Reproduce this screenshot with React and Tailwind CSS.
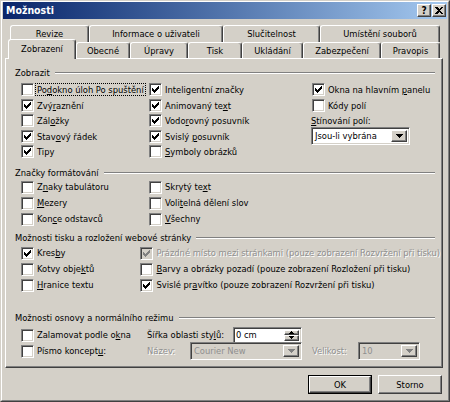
import React from "react";

const FONT = "font-['DejaVu_Sans_Condensed','Liberation_Sans',sans-serif]";

const raised =
  "border border-t-white border-l-white border-r-[#404040] border-b-[#404040] shadow-[inset_-1px_-1px_#808080]";
const sunken =
  "border border-t-[#808080] border-l-[#808080] border-r-white border-b-white shadow-[inset_1px_1px_#404040,inset_-1px_-1px_#d4d0c8]";

const CHECK_Y = [2, 3, 4, 3, 2, 1, 0];

function Box({ checked, disabled }) {
  return (
    <span
      className={`flex items-center justify-center w-[13px] h-[13px] shrink-0 ${sunken} ${
        disabled ? "bg-[#d4d0c8]" : "bg-white"
      }`}
    >
      {checked && (
        <svg width="7" height="7" viewBox="0 0 7 7" shapeRendering="crispEdges">
          {CHECK_Y.map((y, i) => (
            <rect key={i} x={i} y={y} width="1" height="3" fill={disabled ? "#808080" : "#000"} />
          ))}
        </svg>
      )}
    </span>
  );
}

function Check({ checked, disabled, focus, children, h = "h-[15.5px]" }) {
  return (
    <div className={`flex items-center ${h}`}>
      <Box checked={checked} disabled={disabled} />
      <span
        className={`ml-px px-px py-px border whitespace-nowrap ${
          focus ? "border-dotted border-black" : "border-transparent"
        } ${disabled ? "text-[#8f8f8f] [text-shadow:1px_1px_0_#fff]" : ""}`}
      >
        {children}
      </span>
    </div>
  );
}

function GroupLabel({ children, h = "h-[14px]" }) {
  return (
    <div className={`flex items-center ${h} pl-[9px] pr-[7px]`}>
      <span className="whitespace-nowrap">{children}</span>
      <span className="ml-[5px] flex-1 border-t border-t-[#808080] border-b border-b-white" />
    </div>
  );
}

function Arrow({ color = "#000" }) {
  return (
    <svg width="7" height="4" viewBox="0 0 7 4" shapeRendering="crispEdges">
      <rect x="0" y="0" width="7" height="1" fill={color} />
      <rect x="1" y="1" width="5" height="1" fill={color} />
      <rect x="2" y="2" width="3" height="1" fill={color} />
      <rect x="3" y="3" width="1" height="1" fill={color} />
    </svg>
  );
}

function Select({ value, width, disabled }) {
  return (
    <div
      className={`flex items-stretch h-[18px] ${width} ${sunken} p-[2px] ${
        disabled ? "bg-[#d4d0c8]" : "bg-white"
      }`}
    >
      <span
        className={`flex-1 flex items-center pl-px whitespace-nowrap overflow-hidden ${
          disabled ? "text-[#8f8f8f]" : ""
        }`}
      >
        {value}
      </span>
      <span className={`w-[16px] flex items-center justify-center bg-[#d4d0c8] ${raised}`}>
        <Arrow color={disabled ? "#808080" : "#000"} />
      </span>
    </div>
  );
}

function Spin({ value }) {
  return (
    <div className={`flex items-stretch h-[17px] w-[69px] bg-white p-[2px] ${sunken}`}>
      <span className="flex-1 flex items-center">{value}</span>
      <span className="w-[15px] flex flex-col">
        <span className={`flex-1 flex items-center justify-center bg-[#d4d0c8] ${raised}`}>
          <svg width="5" height="3" viewBox="0 0 5 3" shapeRendering="crispEdges">
            <rect x="2" y="0" width="1" height="1" />
            <rect x="1" y="1" width="3" height="1" />
            <rect x="0" y="2" width="5" height="1" />
          </svg>
        </span>
        <span className={`flex-1 flex items-center justify-center bg-[#d4d0c8] ${raised}`}>
          <svg width="5" height="3" viewBox="0 0 5 3" shapeRendering="crispEdges">
            <rect x="0" y="0" width="5" height="1" />
            <rect x="1" y="1" width="3" height="1" />
            <rect x="2" y="2" width="1" height="1" />
          </svg>
        </span>
      </span>
    </div>
  );
}

function TitleBar() {
  return (
    <div className="h-[17px] flex items-center justify-between bg-gradient-to-r from-[#0a246a] to-[#a6caf0] pl-[3px] pr-px">
      <span className="text-white font-bold text-[10.5px]">Možnosti</span>
      <div className="flex gap-px">
        <span className={`w-[14px] h-[13px] bg-[#d4d0c8] flex items-center justify-center font-bold text-[10px] ${raised}`}>
          ?
        </span>
        <span className={`w-[14px] h-[13px] bg-[#d4d0c8] flex items-center justify-center ${raised}`}>
          <svg width="8" height="7" viewBox="0 0 8 7" shapeRendering="crispEdges">
            <path d="M0 0h2l2 2 2-2h2L5 3.5 8 7H6L4 5 2 7H0l3-3.5z" />
          </svg>
        </span>
      </div>
    </div>
  );
}

const backRow = [
  ["Revize", "w-[79px]"],
  ["Informace o uživateli", "w-[134px]"],
  ["Slučitelnost", "w-[97px]"],
  ["Umístění souborů", "w-[120px]"],
];

const frontRow = [
  ["Obecné", "w-[54px]"],
  ["Úpravy", "w-[58px]"],
  ["Tisk", "w-[54px]"],
  ["Ukládání", "w-[61px]"],
  ["Zabezpečení", "w-[78px]"],
  ["Pravopis", "w-[59px]"],
];

const tabEdge =
  "border-t border-l border-r border-t-white border-l-white border-r-[#404040] shadow-[inset_-1px_0_#808080] rounded-t-[3px]";

function Tabs() {
  return (
    <div className="flex flex-col">
      <div className="flex ml-[7px] mt-[6px] h-[17px]">
        {backRow.map(([label, w]) => (
          <div key={label} className={`${w} flex items-center justify-center ${tabEdge}`}>
            {label}
          </div>
        ))}
      </div>
      <div className="flex items-start -mt-[3px] ml-[5px] h-[19px]">
        <div className={`relative z-10 w-[68px] h-[20px] bg-[#d4d0c8] flex items-center justify-center pb-[1px] ${tabEdge}`}>
          Zobrazení
        </div>
        {frontRow.map(([label, w]) => (
          <div key={label} className={`${w} h-[16px] mt-[3px] bg-[#d4d0c8] flex items-center justify-center ${tabEdge}`}>
            {label}
          </div>
        ))}
      </div>
    </div>
  );
}

function Panel() {
  return (
    <div
      className={`ml-[2px] mr-[4px] h-[310px] border border-t-white border-l-white border-r-[#404040] border-b-[#404040] shadow-[inset_-1px_-1px_#808080] pt-[7px]`}
    >
      <GroupLabel>Zobrazit</GroupLabel>
      <div className="flex pl-[15px] mt-[2px]">
        <div className="w-[128px] flex flex-col">
          <Check focus>
            Po<u>d</u>okno úloh Po spuštění
          </Check>
          <Check checked>
            Zvý<u>r</u>aznění
          </Check>
          <Check>
            Zál<u>o</u>žky
          </Check>
          <Check checked>
            Stav<u>o</u>vý řádek
          </Check>
          <Check checked>Tipy</Check>
        </div>
        <div className="w-[163px] flex flex-col">
          <Check checked>Inteligentní značky</Check>
          <Check checked>
            Animovaný te<u>x</u>t
          </Check>
          <Check checked>
            Vodo<u>r</u>ovný posuvník
          </Check>
          <Check checked>
            Svislý <u>p</u>osuvník
          </Check>
          <Check>
            <u>S</u>ymboly obrázků
          </Check>
        </div>
        <div className="flex flex-col">
          <Check checked>
            Okna na hlavním <u>p</u>anelu
          </Check>
          <Check>Kódy polí</Check>
          <div className="h-[12.5px] flex items-end -ml-px">
            <span>
              <u>S</u>tínování polí:
            </span>
          </div>
          <div className="-ml-px mt-px">
            <Select value="Jsou-li vybrána" width="w-[99px]" />
          </div>
        </div>
      </div>

      <div className="mt-[6.5px]">
        <GroupLabel h="h-[13px]">Značky formátování</GroupLabel>
      </div>
      <div className="flex pl-[15px]">
        <div className="w-[128px] flex flex-col">
          <Check h="h-[16px]">
            Z<u>n</u>aky tabulátoru
          </Check>
          <Check h="h-[16px]">
            <u>M</u>ezery
          </Check>
          <Check h="h-[16px]">
            Kon<u>c</u>e odstavců
          </Check>
        </div>
        <div className="flex flex-col">
          <Check h="h-[16px]">
            Skrytý te<u>x</u>t
          </Check>
          <Check h="h-[16px]">
            Voli<u>t</u>elná dělení slov
          </Check>
          <Check h="h-[16px]">
            <u>V</u>šechny
          </Check>
        </div>
      </div>

      <div className="mt-[4px]">
        <GroupLabel>Možnosti tisku a rozložení webové stránky</GroupLabel>
      </div>
      <div className="flex pl-[15px]">
        <div className="w-[128px] flex flex-col">
          <Check checked h="h-[16px]">
            Kres<u>b</u>y
          </Check>
          <Check h="h-[16px]">
            Kotvy obje<u>k</u>tů
          </Check>
          <Check h="h-[16px]">
            <u>H</u>ranice textu
          </Check>
        </div>
        <div className="flex flex-col">
          <Check checked disabled h="h-[16px]">
            Prázdné místo mezi stránkami (pouze zobrazení Rozvržení při tisku)
          </Check>
          <Check h="h-[16px]">
            <u>B</u>arvy a obrázky pozadí (pouze zobrazení Rozložení při tisku)
          </Check>
          <Check checked h="h-[16px]">
            Svislé pr<u>a</u>vítko (pouze zobrazení Rozvržení při tisku)
          </Check>
        </div>
      </div>

      <div className="mt-[18px]">
        <GroupLabel>Možnosti osnovy a normálního režimu</GroupLabel>
      </div>
      <div className="flex flex-col pl-[15px] mt-[2px]">
        <div className="flex items-center h-[16px]">
          <div className="w-[126px]">
            <Check h="h-[16px]">
              Zalamovat podle o<u>k</u>na
            </Check>
          </div>
          <span className="w-[86px] whitespace-nowrap">
            Šířka oblasti sty<u>l</u>ů:
          </span>
          <Spin value="0 cm" />
        </div>
        <div className="flex items-center h-[16px]">
          <div className="w-[126px]">
            <Check h="h-[16px]">
              Písmo koncept<u>u</u>:
            </Check>
          </div>
          <span className="w-[43px] text-[#8f8f8f] [text-shadow:1px_1px_0_#fff]">Název:</span>
          <Select value="Courier New" width="w-[112px]" disabled />
          <span className="ml-[10px] w-[46px] text-[#8f8f8f] [text-shadow:1px_1px_0_#fff]">Velikost:</span>
          <Select value="10" width="w-[62px]" disabled />
        </div>
      </div>
    </div>
  );
}

function Footer() {
  return (
    <div className="flex justify-end gap-[6px] mr-[5px] mt-[7px]">
      <button className="w-[64px] h-[19px] border border-black bg-[#d4d0c8] p-0">
        <span className={`flex items-center justify-center w-full h-full ${raised}`}>OK</span>
      </button>
      <button className={`w-[64px] h-[19px] bg-[#d4d0c8] flex items-center justify-center ${raised}`}>
        Storno
      </button>
    </div>
  );
}

export default function App() {
  return (
    <div
      className={`w-[450px] h-[402px] bg-[#d4d0c8] border border-t-[#d4d0c8] border-l-[#d4d0c8] border-r-[#404040] border-b-[#404040] text-black ${FONT} text-[9.3px] leading-none select-none`}
    >
      <div className="h-full flex flex-col border border-t-white border-l-white border-r-[#808080] border-b-[#808080] px-px">
        <TitleBar />
        <Tabs />
        <Panel />
        <Footer />
      </div>
    </div>
  );
}
